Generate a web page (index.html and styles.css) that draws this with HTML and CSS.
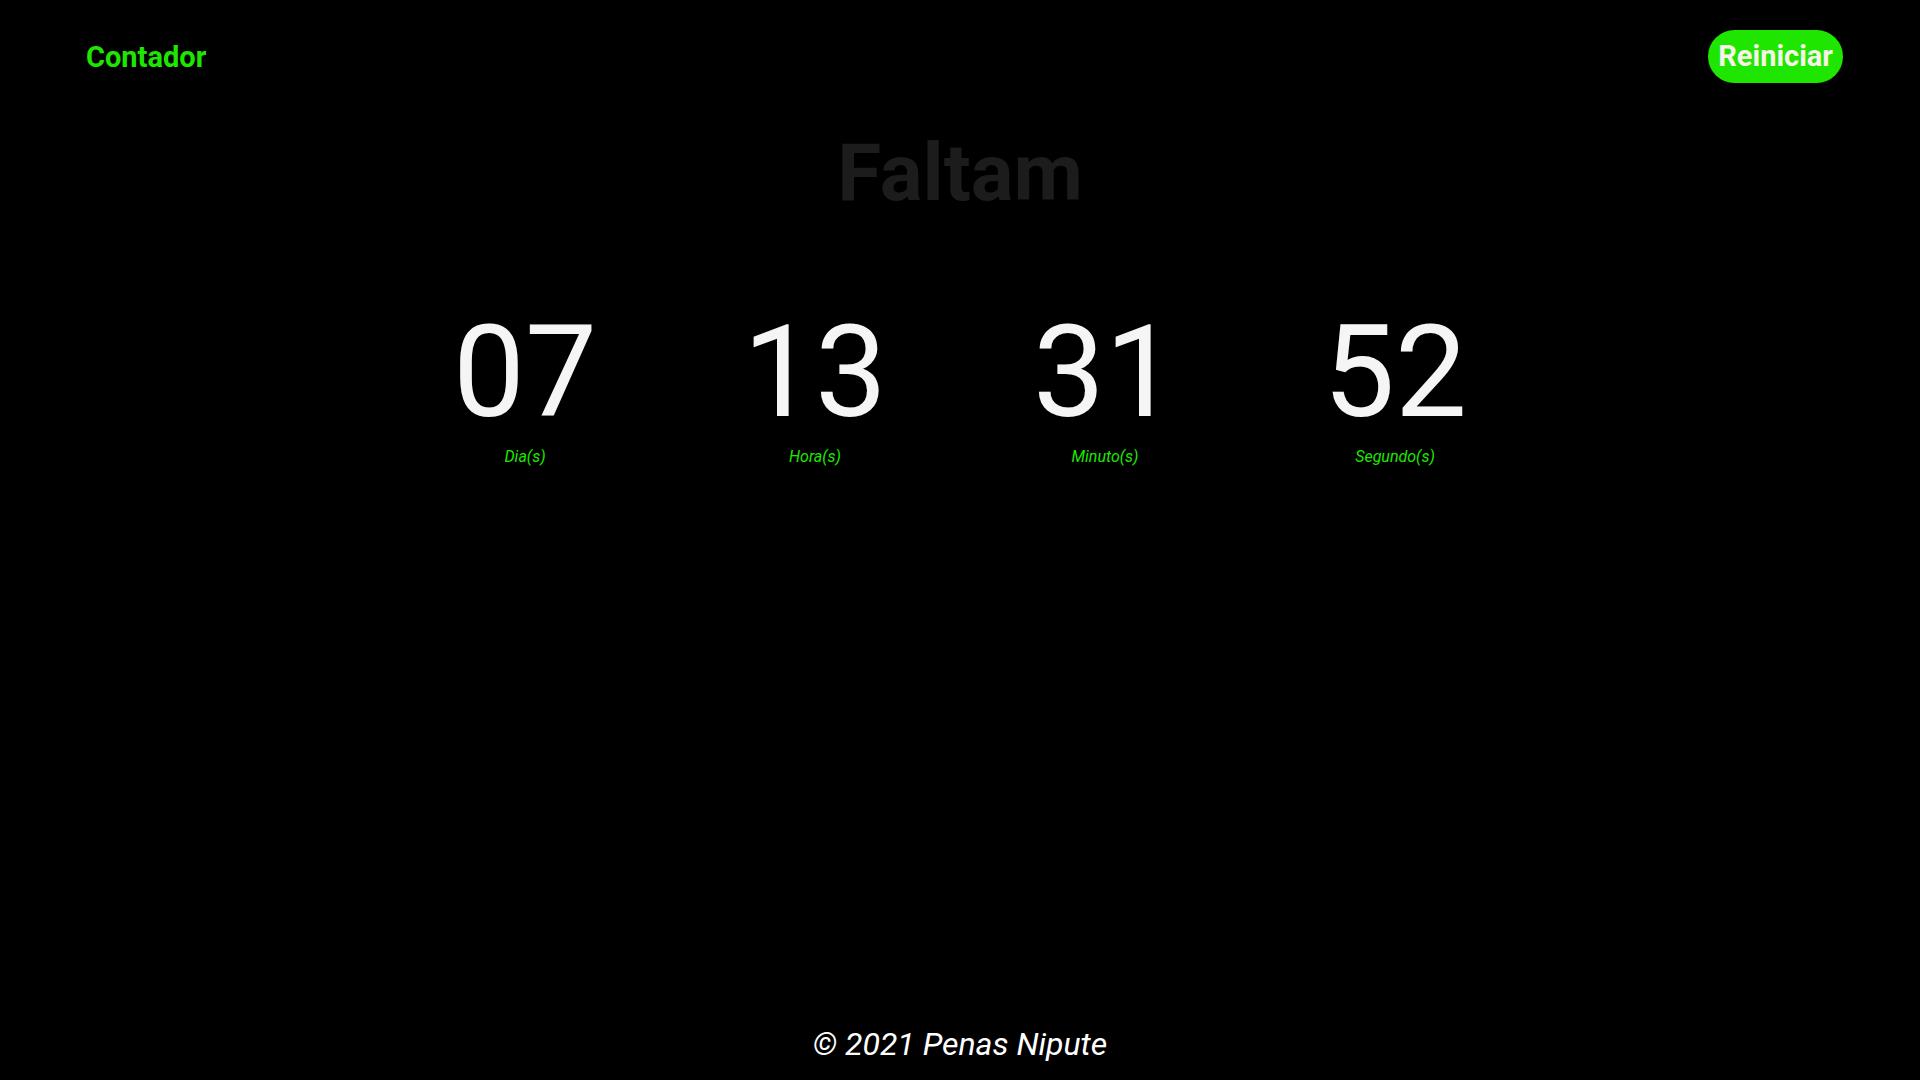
FILE: index.html
```html
<!DOCTYPE html>
<html lang="pt-BR">
<head>
<meta charset="utf-8">
<title>Contador</title>
<link rel="stylesheet" href="styles.css">
</head>
<body>
<div class="page">
  <header class="topbar">
    <span class="brand">Contador</span>
    <button class="reset">Reiniciar</button>
  </header>
  <main class="main">
    <h1 class="title">Faltam</h1>
    <div class="counter">
      <div class="unit"><span class="num">07</span><span class="label">Dia(s)</span></div>
      <div class="unit"><span class="num">13</span><span class="label">Hora(s)</span></div>
      <div class="unit"><span class="num">31</span><span class="label">Minuto(s)</span></div>
      <div class="unit"><span class="num">52</span><span class="label">Segundo(s)</span></div>
    </div>
  </main>
  <footer class="footer">© 2021 Penas Nipute</footer>
</div>
</body>
</html>
```

FILE: styles.css
```css
html, body {
  margin: 0;
  padding: 0;
  background: #000;
}
body {
  font-family: Roboto, "Liberation Sans", sans-serif;
  color: #f5f5f5;
}
.page {
  min-height: 100vh;
  display: flex;
  flex-direction: column;
}
.topbar {
  display: flex;
  justify-content: space-between;
  align-items: center;
  padding: 30px 77px 0 86px;
}
.brand {
  color: #1ee600;
  font-weight: 700;
  font-size: 29px;
}
.reset {
  background: #1ee600;
  color: #f7f3e6;
  border: none;
  border-radius: 30px;
  font-family: Roboto, "Liberation Sans", sans-serif;
  font-weight: 700;
  font-size: 29px;
  line-height: 33px;
  padding: 10px 10px;
  cursor: pointer;
}
.main {
  flex: 1;
  display: flex;
  flex-direction: column;
  align-items: center;
}
.title {
  margin: 43px 0 0;
  font-size: 80px;
  font-weight: 700;
  line-height: normal;
  color: #1c1c1c;
}
.counter {
  margin-top: 77px;
  display: grid;
  grid-template-columns: repeat(4, 290px);
  justify-content: center;
}
.unit {
  display: flex;
  flex-direction: column;
  align-items: center;
}
.num {
  font-size: 128px;
  line-height: normal;
  font-weight: 400;
  color: #f5f5f5;
}
.label {
  margin-top: 0;
  font-size: 16px;
  font-style: italic;
  color: #1ee600;
}
.footer {
  text-align: center;
  font-size: 32px;
  font-style: italic;
  color: #fff;
  padding-bottom: 17px;
}
```
